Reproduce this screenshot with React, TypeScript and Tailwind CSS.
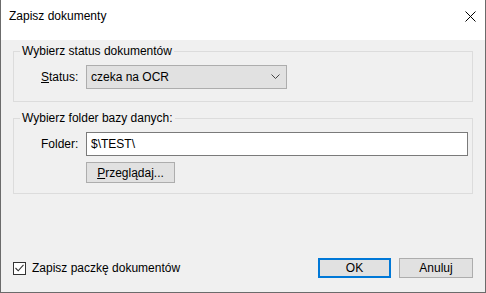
import React from "react";

const font = { fontFamily: '"Segoe UI", "Liberation Sans", Arial, sans-serif' };

function Chevron() {
  return (
    <svg width="9" height="6" viewBox="0 0 9 6" className="shrink-0">
      <polyline points="0.5,0.5 4.5,4.5 8.5,0.5" fill="none" stroke="#444" strokeWidth="1" />
    </svg>
  );
}

function CloseIcon() {
  return (
    <svg width="11" height="11" viewBox="0 0 11 11">
      <line x1="0.5" y1="0.5" x2="10.5" y2="10.5" stroke="#000" strokeWidth="1" />
      <line x1="10.5" y1="0.5" x2="0.5" y2="10.5" stroke="#000" strokeWidth="1" />
    </svg>
  );
}

function CheckBox() {
  return (
    <span className="w-[13px] h-[13px] border border-[#333] bg-white flex items-center justify-center shrink-0">
      <svg width="9" height="8" viewBox="0 0 9 8">
        <polyline points="0.5,4 3.2,6.8 8.5,0.8" fill="none" stroke="#333" strokeWidth="1.1" />
      </svg>
    </span>
  );
}

export default function App() {
  return (
    <div
      className="w-[486px] h-[293px] flex flex-col bg-[#f0f0f0] border-x border-b border-[#6b6b6b] text-[12px] text-black"
      style={font}
    >
      {/* title bar */}
      <div className="h-[40px] bg-white flex items-start justify-between shrink-0">
        <span className="pl-[8px] pt-[8px] leading-[16px]">Zapisz dokumenty</span>
        <span className="pt-[11px] pr-[9px]">
          <CloseIcon />
        </span>
      </div>

      <div className="flex-1 flex flex-col px-[12px] pt-[4px] pb-[14px]">
        {/* group 1 */}
        <fieldset className="w-[460px] h-[58px] border border-[#dcdcdc] px-0 pt-[7px]">
          <legend className="ml-[6px] px-[2px] leading-[14px]">Wybierz status dokumentów</legend>
          <div className="flex items-center">
            <span className="w-[72px] pl-[27px]">
              <span className="underline">S</span>tatus:
            </span>
            <div className="w-[201px] h-[24px] bg-[#e1e1e1] border border-[#adadad] flex items-center justify-between pl-[4px] pr-[6px]">
              <span>czeka na OCR</span>
              <Chevron />
            </div>
          </div>
        </fieldset>

        {/* group 2 */}
        <fieldset className="w-[460px] h-[83px] border border-[#dcdcdc] px-0 pt-[7px] mt-[9px]">
          <legend className="ml-[6px] px-[2px] leading-[14px]">Wybierz folder bazy danych:</legend>
          <div className="flex items-center">
            <span className="w-[72px] pl-[27px]">Folder:</span>
            <div className="w-[382px] h-[24px] bg-white border border-[#7a7a7a] flex items-center pl-[4px]">
              $\TEST\
            </div>
          </div>
          <div className="pl-[72px] pt-[6px]">
            <button className="w-[89px] h-[21px] bg-[#e1e1e1] border border-[#adadad] flex items-center justify-center leading-none">
              <span>
                <span className="underline">P</span>rzeglądaj...
              </span>
            </button>
          </div>
        </fieldset>

        {/* footer */}
        <div className="mt-auto flex items-center justify-between w-[460px]">
          <label className="flex items-center gap-[6px]">
            <CheckBox />
            <span>Zapisz paczkę dokumentów</span>
          </label>
          <div className="flex gap-[8px]">
            <button className="w-[73px] h-[20px] bg-[#e1e1e1] border-2 border-[#0078d7] flex items-center justify-center leading-none">
              OK
            </button>
            <button className="w-[74px] h-[20px] bg-[#e1e1e1] border border-[#adadad] flex items-center justify-center leading-none">
              Anuluj
            </button>
          </div>
        </div>
      </div>
    </div>
  );
}
